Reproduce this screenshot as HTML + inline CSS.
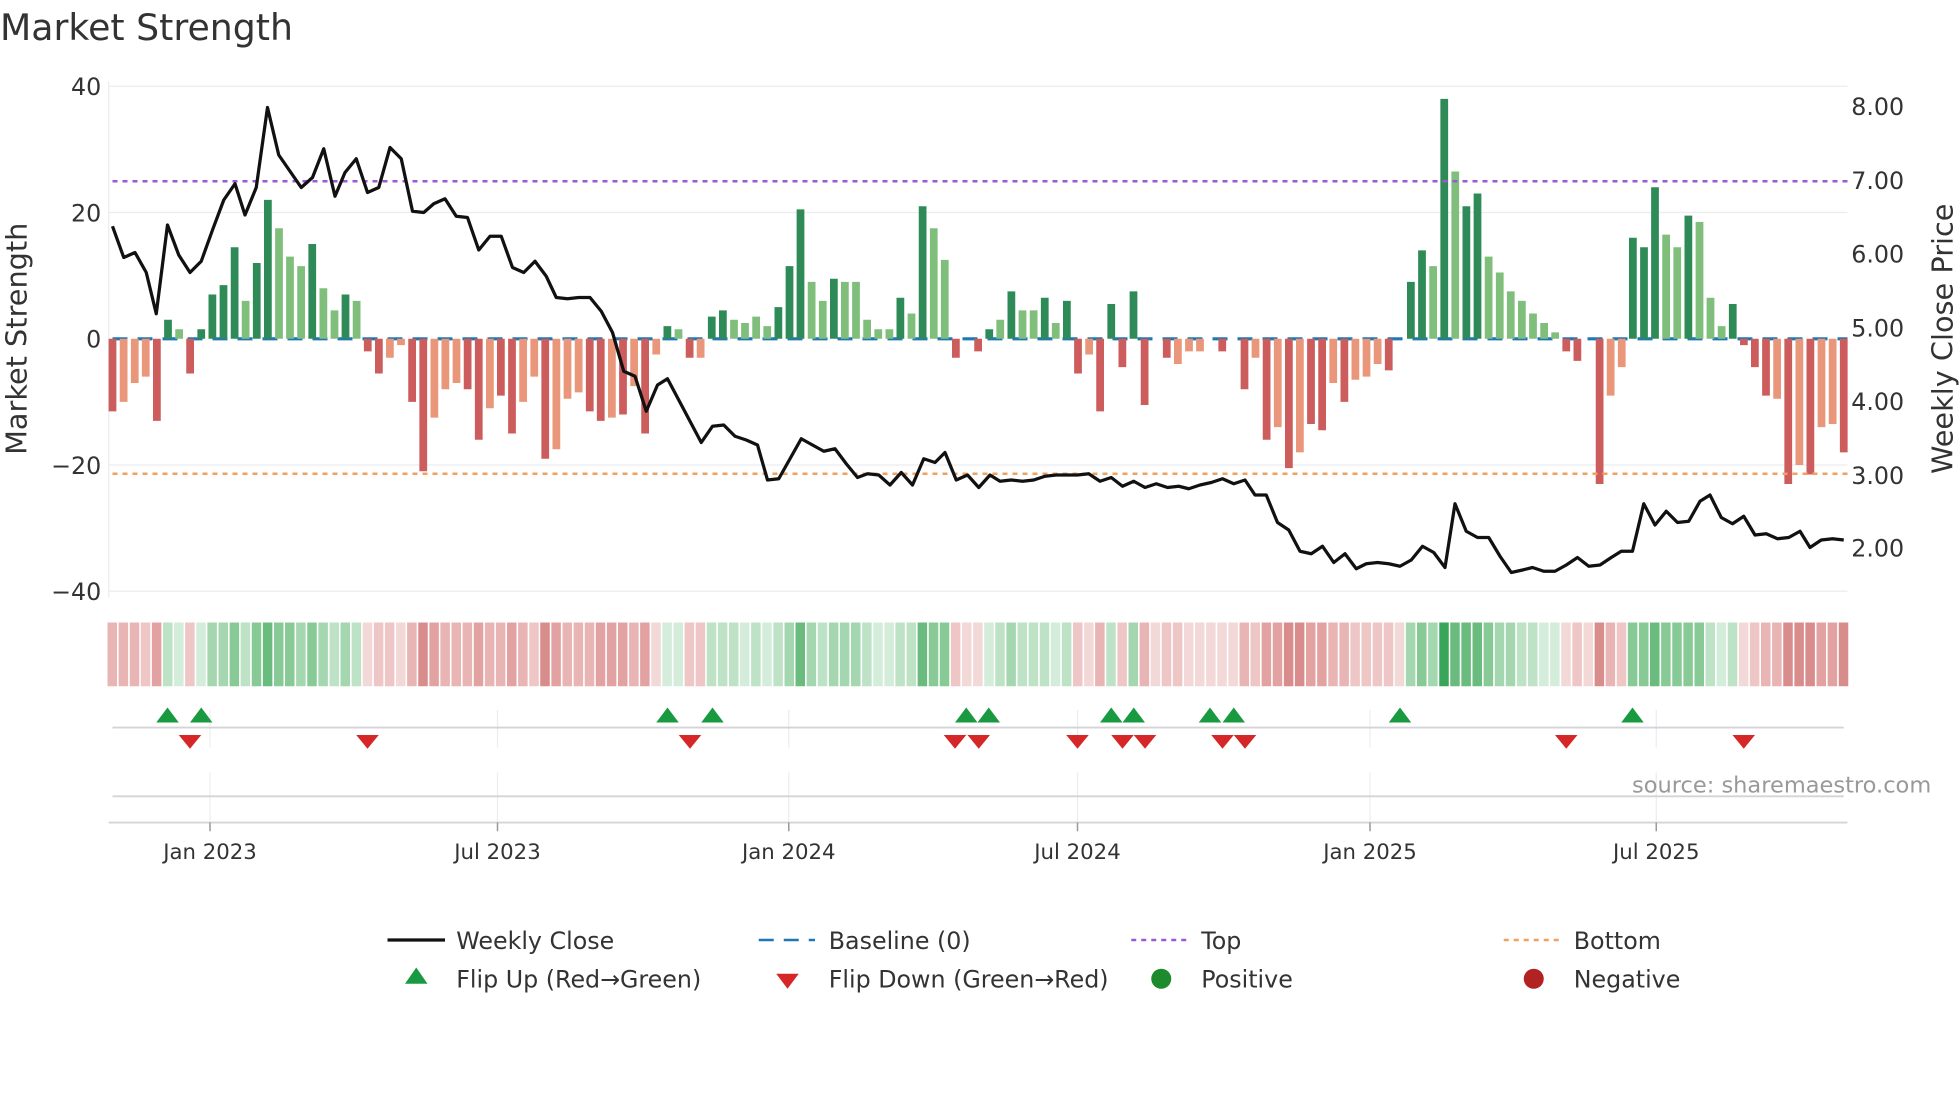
<!DOCTYPE html>
<html><head><meta charset="utf-8"><style>
html,body{margin:0;padding:0;background:#fff;}
svg{display:block;font-family:"DejaVu Sans","Liberation Sans",sans-serif;}
.G{fill:#2e8b57}.g{fill:#7fbf7b}.R{fill:#cd5c5c}.r{fill:#e9967a}
.n1{fill:#f3d8d8}.n2{fill:#eec6c6}.n3{fill:#e8b4b4}.n4{fill:#e2a2a2}.n5{fill:#d98c8c}
.p1{fill:#d4edda}.p2{fill:#bde2c5}.p3{fill:#a4d7af}.p4{fill:#88ca96}.p5{fill:#6abb7e}.p6{fill:#38a558}
</style></head><body>
<svg width="1960" height="1102" viewBox="0 0 1568 881.6" xmlns="http://www.w3.org/2000/svg">
<rect width="1568" height="882" fill="#fff"/>
<text x="0" y="32" font-size="29" fill="#333">Market Strength</text>
<g stroke="#ececf0" stroke-width="1">
<line x1="87" y1="69" x2="1478" y2="69"/><line x1="87" y1="170" x2="1478" y2="170"/>
<line x1="87" y1="372" x2="1478" y2="372"/><line x1="87" y1="473" x2="1478" y2="473"/>
<line x1="87" y1="65" x2="87" y2="478"/>
<line x1="168" y1="568" x2="168" y2="598"/><line x1="398" y1="568" x2="398" y2="598"/><line x1="631" y1="568" x2="631" y2="598"/><line x1="862" y1="568" x2="862" y2="598"/><line x1="1096" y1="568" x2="1096" y2="598"/><line x1="1325" y1="568" x2="1325" y2="598"/>
<line x1="168" y1="618" x2="168" y2="658"/><line x1="398" y1="618" x2="398" y2="658"/><line x1="631" y1="618" x2="631" y2="658"/><line x1="862" y1="618" x2="862" y2="658"/><line x1="1096" y1="618" x2="1096" y2="658"/><line x1="1325" y1="618" x2="1325" y2="658"/>
</g>
<line x1="90" y1="582" x2="1475" y2="582" stroke="#d4d4d8" stroke-width="1.5"/>
<line x1="90" y1="637" x2="1475" y2="637" stroke="#d4d4d8" stroke-width="1.5"/>
<line x1="87" y1="658" x2="1478" y2="658" stroke="#d4d4d8" stroke-width="1.5"/>
<g stroke="#999" stroke-width="1.2"><line x1="168" y1="658" x2="168" y2="665"/><line x1="398" y1="658" x2="398" y2="665"/><line x1="631" y1="658" x2="631" y2="665"/><line x1="862" y1="658" x2="862" y2="665"/><line x1="1096" y1="658" x2="1096" y2="665"/><line x1="1325" y1="658" x2="1325" y2="665"/></g>
<g font-size="17" fill="#333" text-anchor="middle">
<text x="168" y="687">Jan 2023</text><text x="398" y="687">Jul 2023</text><text x="631" y="687">Jan 2024</text><text x="862" y="687">Jul 2024</text><text x="1096" y="687">Jan 2025</text><text x="1325" y="687">Jul 2025</text>
</g>
<g font-size="19" fill="#333" text-anchor="end">
<text x="81" y="76">40</text><text x="81" y="177">20</text><text x="81" y="278">0</text><text x="81" y="379">−20</text><text x="81" y="480">−40</text>
</g>
<g font-size="19" fill="#333">
<text x="1481" y="92">8.00</text><text x="1481" y="151">7.00</text><text x="1481" y="210">6.00</text><text x="1481" y="269">5.00</text><text x="1481" y="328">4.00</text><text x="1481" y="387">3.00</text><text x="1481" y="445">2.00</text>
</g>
<text transform="translate(21,271) rotate(-90)" font-size="23" fill="#333" text-anchor="middle">Market Strength</text>
<text transform="translate(1562,271) rotate(-90)" font-size="23" fill="#333" text-anchor="middle">Weekly Close Price</text>
<line x1="90" y1="271" x2="1478" y2="271" stroke="#1f77b4" stroke-width="2.5" stroke-dasharray="12 8"/>
<g>
<rect class="R" x="86.9" y="271" width="6.2" height="58.1"/>
<rect class="r" x="95.8" y="271" width="6.2" height="50.5"/>
<rect class="r" x="104.7" y="271" width="6.2" height="35.4"/>
<rect class="r" x="113.5" y="271" width="6.2" height="30.3"/>
<rect class="R" x="122.4" y="271" width="6.2" height="65.7"/>
<rect class="G" x="131.3" y="255.8" width="6.2" height="15.2"/>
<rect class="g" x="140.2" y="263.4" width="6.2" height="7.6"/>
<rect class="R" x="149" y="271" width="6.2" height="27.8"/>
<rect class="G" x="157.9" y="263.4" width="6.2" height="7.6"/>
<rect class="G" x="166.8" y="235.6" width="6.2" height="35.4"/>
<rect class="G" x="175.7" y="228.1" width="6.2" height="42.9"/>
<rect class="G" x="184.6" y="197.8" width="6.2" height="73.2"/>
<rect class="g" x="193.4" y="240.7" width="6.2" height="30.3"/>
<rect class="G" x="202.3" y="210.4" width="6.2" height="60.6"/>
<rect class="G" x="211.2" y="159.9" width="6.2" height="111.1"/>
<rect class="g" x="220.1" y="182.6" width="6.2" height="88.4"/>
<rect class="g" x="228.9" y="205.3" width="6.2" height="65.7"/>
<rect class="g" x="237.8" y="212.9" width="6.2" height="58.1"/>
<rect class="G" x="246.7" y="195.2" width="6.2" height="75.8"/>
<rect class="g" x="255.6" y="230.6" width="6.2" height="40.4"/>
<rect class="g" x="264.5" y="248.3" width="6.2" height="22.7"/>
<rect class="G" x="273.3" y="235.6" width="6.2" height="35.4"/>
<rect class="g" x="282.2" y="240.7" width="6.2" height="30.3"/>
<rect class="R" x="291.1" y="271" width="6.2" height="10.1"/>
<rect class="R" x="300" y="271" width="6.2" height="27.8"/>
<rect class="r" x="308.8" y="271" width="6.2" height="15.2"/>
<rect class="r" x="317.7" y="271" width="6.2" height="5.1"/>
<rect class="R" x="326.6" y="271" width="6.2" height="50.5"/>
<rect class="R" x="335.5" y="271" width="6.2" height="106"/>
<rect class="r" x="344.4" y="271" width="6.2" height="63.1"/>
<rect class="r" x="353.2" y="271" width="6.2" height="40.4"/>
<rect class="r" x="362.1" y="271" width="6.2" height="35.4"/>
<rect class="R" x="371" y="271" width="6.2" height="40.4"/>
<rect class="R" x="379.9" y="271" width="6.2" height="80.8"/>
<rect class="r" x="388.8" y="271" width="6.2" height="55.6"/>
<rect class="R" x="397.6" y="271" width="6.2" height="45.5"/>
<rect class="R" x="406.5" y="271" width="6.2" height="75.8"/>
<rect class="r" x="415.4" y="271" width="6.2" height="50.5"/>
<rect class="r" x="424.3" y="271" width="6.2" height="30.3"/>
<rect class="R" x="433.1" y="271" width="6.2" height="96"/>
<rect class="r" x="442" y="271" width="6.2" height="88.4"/>
<rect class="r" x="450.9" y="271" width="6.2" height="48"/>
<rect class="r" x="459.8" y="271" width="6.2" height="42.9"/>
<rect class="R" x="468.7" y="271" width="6.2" height="58.1"/>
<rect class="R" x="477.5" y="271" width="6.2" height="65.7"/>
<rect class="r" x="486.4" y="271" width="6.2" height="63.1"/>
<rect class="R" x="495.3" y="271" width="6.2" height="60.6"/>
<rect class="r" x="504.2" y="271" width="6.2" height="37.9"/>
<rect class="R" x="513" y="271" width="6.2" height="75.8"/>
<rect class="r" x="521.9" y="271" width="6.2" height="12.6"/>
<rect class="G" x="530.8" y="260.9" width="6.2" height="10.1"/>
<rect class="g" x="539.7" y="263.4" width="6.2" height="7.6"/>
<rect class="R" x="548.6" y="271" width="6.2" height="15.2"/>
<rect class="r" x="557.4" y="271" width="6.2" height="15.2"/>
<rect class="G" x="566.3" y="253.3" width="6.2" height="17.7"/>
<rect class="G" x="575.2" y="248.3" width="6.2" height="22.7"/>
<rect class="g" x="584.1" y="255.8" width="6.2" height="15.2"/>
<rect class="g" x="592.9" y="258.4" width="6.2" height="12.6"/>
<rect class="g" x="601.8" y="253.3" width="6.2" height="17.7"/>
<rect class="g" x="610.7" y="260.9" width="6.2" height="10.1"/>
<rect class="G" x="619.6" y="245.7" width="6.2" height="25.3"/>
<rect class="G" x="628.5" y="212.9" width="6.2" height="58.1"/>
<rect class="G" x="637.3" y="167.5" width="6.2" height="103.5"/>
<rect class="g" x="646.2" y="225.5" width="6.2" height="45.5"/>
<rect class="g" x="655.1" y="240.7" width="6.2" height="30.3"/>
<rect class="G" x="664" y="223" width="6.2" height="48"/>
<rect class="g" x="672.8" y="225.5" width="6.2" height="45.5"/>
<rect class="g" x="681.7" y="225.5" width="6.2" height="45.5"/>
<rect class="g" x="690.6" y="255.8" width="6.2" height="15.2"/>
<rect class="g" x="699.5" y="263.4" width="6.2" height="7.6"/>
<rect class="g" x="708.4" y="263.4" width="6.2" height="7.6"/>
<rect class="G" x="717.2" y="238.2" width="6.2" height="32.8"/>
<rect class="g" x="726.1" y="250.8" width="6.2" height="20.2"/>
<rect class="G" x="735" y="165" width="6.2" height="106"/>
<rect class="g" x="743.9" y="182.6" width="6.2" height="88.4"/>
<rect class="g" x="752.7" y="207.9" width="6.2" height="63.1"/>
<rect class="R" x="761.6" y="271" width="6.2" height="15.2"/>
<rect class="R" x="779.4" y="271" width="6.2" height="10.1"/>
<rect class="G" x="788.3" y="263.4" width="6.2" height="7.6"/>
<rect class="g" x="797.1" y="255.8" width="6.2" height="15.2"/>
<rect class="G" x="806" y="233.1" width="6.2" height="37.9"/>
<rect class="g" x="814.9" y="248.3" width="6.2" height="22.7"/>
<rect class="g" x="823.8" y="248.3" width="6.2" height="22.7"/>
<rect class="G" x="832.7" y="238.2" width="6.2" height="32.8"/>
<rect class="g" x="841.5" y="258.4" width="6.2" height="12.6"/>
<rect class="G" x="850.4" y="240.7" width="6.2" height="30.3"/>
<rect class="R" x="859.3" y="271" width="6.2" height="27.8"/>
<rect class="r" x="868.2" y="271" width="6.2" height="12.6"/>
<rect class="R" x="877" y="271" width="6.2" height="58.1"/>
<rect class="G" x="885.9" y="243.2" width="6.2" height="27.8"/>
<rect class="R" x="894.8" y="271" width="6.2" height="22.7"/>
<rect class="G" x="903.7" y="233.1" width="6.2" height="37.9"/>
<rect class="R" x="912.6" y="271" width="6.2" height="53"/>
<rect class="R" x="930.3" y="271" width="6.2" height="15.2"/>
<rect class="r" x="939.2" y="271" width="6.2" height="20.2"/>
<rect class="r" x="948.1" y="271" width="6.2" height="10.1"/>
<rect class="r" x="956.9" y="271" width="6.2" height="10.1"/>
<rect class="R" x="974.7" y="271" width="6.2" height="10.1"/>
<rect class="R" x="992.5" y="271" width="6.2" height="40.4"/>
<rect class="r" x="1001.3" y="271" width="6.2" height="15.2"/>
<rect class="R" x="1010.2" y="271" width="6.2" height="80.8"/>
<rect class="r" x="1019.1" y="271" width="6.2" height="70.7"/>
<rect class="R" x="1028" y="271" width="6.2" height="103.5"/>
<rect class="r" x="1036.8" y="271" width="6.2" height="90.9"/>
<rect class="R" x="1045.7" y="271" width="6.2" height="68.2"/>
<rect class="R" x="1054.6" y="271" width="6.2" height="73.2"/>
<rect class="r" x="1063.5" y="271" width="6.2" height="35.4"/>
<rect class="R" x="1072.4" y="271" width="6.2" height="50.5"/>
<rect class="r" x="1081.2" y="271" width="6.2" height="32.8"/>
<rect class="r" x="1090.1" y="271" width="6.2" height="30.3"/>
<rect class="r" x="1099" y="271" width="6.2" height="20.2"/>
<rect class="R" x="1107.9" y="271" width="6.2" height="25.3"/>
<rect class="G" x="1125.6" y="225.5" width="6.2" height="45.5"/>
<rect class="G" x="1134.5" y="200.3" width="6.2" height="70.7"/>
<rect class="g" x="1143.4" y="212.9" width="6.2" height="58.1"/>
<rect class="G" x="1152.3" y="79.1" width="6.2" height="191.9"/>
<rect class="g" x="1161.1" y="137.2" width="6.2" height="133.8"/>
<rect class="G" x="1170" y="165" width="6.2" height="106"/>
<rect class="G" x="1178.9" y="154.8" width="6.2" height="116.2"/>
<rect class="g" x="1187.8" y="205.3" width="6.2" height="65.7"/>
<rect class="g" x="1196.7" y="218" width="6.2" height="53"/>
<rect class="g" x="1205.5" y="233.1" width="6.2" height="37.9"/>
<rect class="g" x="1214.4" y="240.7" width="6.2" height="30.3"/>
<rect class="g" x="1223.3" y="250.8" width="6.2" height="20.2"/>
<rect class="g" x="1232.2" y="258.4" width="6.2" height="12.6"/>
<rect class="g" x="1241" y="265.9" width="6.2" height="5.1"/>
<rect class="R" x="1249.9" y="271" width="6.2" height="10.1"/>
<rect class="R" x="1258.8" y="271" width="6.2" height="17.7"/>
<rect class="R" x="1276.6" y="271" width="6.2" height="116.2"/>
<rect class="r" x="1285.4" y="271" width="6.2" height="45.5"/>
<rect class="r" x="1294.3" y="271" width="6.2" height="22.7"/>
<rect class="G" x="1303.2" y="190.2" width="6.2" height="80.8"/>
<rect class="G" x="1312.1" y="197.8" width="6.2" height="73.2"/>
<rect class="G" x="1320.9" y="149.8" width="6.2" height="121.2"/>
<rect class="g" x="1329.8" y="187.7" width="6.2" height="83.3"/>
<rect class="g" x="1338.7" y="197.8" width="6.2" height="73.2"/>
<rect class="G" x="1347.6" y="172.5" width="6.2" height="98.5"/>
<rect class="g" x="1356.5" y="177.6" width="6.2" height="93.4"/>
<rect class="g" x="1365.3" y="238.2" width="6.2" height="32.8"/>
<rect class="g" x="1374.2" y="260.9" width="6.2" height="10.1"/>
<rect class="G" x="1383.1" y="243.2" width="6.2" height="27.8"/>
<rect class="R" x="1392" y="271" width="6.2" height="5.1"/>
<rect class="R" x="1400.8" y="271" width="6.2" height="22.7"/>
<rect class="R" x="1409.7" y="271" width="6.2" height="45.5"/>
<rect class="r" x="1418.6" y="271" width="6.2" height="48"/>
<rect class="R" x="1427.5" y="271" width="6.2" height="116.2"/>
<rect class="r" x="1436.4" y="271" width="6.2" height="101"/>
<rect class="R" x="1445.2" y="271" width="6.2" height="108.6"/>
<rect class="r" x="1454.1" y="271" width="6.2" height="70.7"/>
<rect class="r" x="1463" y="271" width="6.2" height="68.2"/>
<rect class="R" x="1471.9" y="271" width="6.2" height="90.9"/>
</g>
<line x1="90" y1="145" x2="1478" y2="145" stroke="#9b59d9" stroke-width="2" stroke-dasharray="4 4"/>
<line x1="90" y1="379" x2="1478" y2="379" stroke="#f0a060" stroke-width="2" stroke-dasharray="4 4"/>
<polyline fill="none" stroke="#111" stroke-width="2.6" stroke-linejoin="round" points="90,181 99,206 108,202 117,218 125,251 134,180 143,204 152,218 161,209 170,184 179,160 188,147 196,172 205,150 214,86 223,124 232,137 241,150 250,142 259,119 268,157 276,138 285,127 294,154 303,150 312,118 321,127 330,169 339,170 347,163 356,159 365,173 374,174 383,200 392,189 401,189 410,214 419,218 428,209 437,221 445,238 454,239 463,238 472,238 481,249 490,266 499,297 508,301 517,329 526,308 534,303 543,320 552,337 561,354 570,341 579,340 588,349 597,352 606,356 614,384 623,383 632,367 641,351 650,356 659,361 668,359 677,371 686,382 694,379 703,380 712,388 721,378 730,388 739,367 748,370 756,362 765,384 774,380 783,390 792,380 800,385 809,384 818,385 827,384 836,381 845,380 853,380 862,380 871,379 880,385 889,382 898,389 907,385 916,390 925,387 934,390 943,389 951,391 960,388 969,386 978,383 987,387 996,384 1004,396 1013,396 1022,418 1031,424 1040,441 1049,443 1058,437 1067,450 1076,443 1085,455 1093,451 1102,450 1111,451 1120,453 1129,448 1138,437 1147,442 1156,454 1164,403 1173,425 1182,430 1191,430 1200,445 1209,458 1218,456 1226,454 1235,457 1244,457 1253,452 1262,446 1271,453 1280,452 1289,446 1297,441 1306,441 1315,403 1324,420 1333,409 1342,418 1351,417 1360,401 1368,396 1377,414 1386,419 1395,413 1404,428 1413,427 1422,431 1431,430 1440,425 1448,438 1457,432 1466,431 1475,432"/>
<g transform="translate(0,498)">
<rect class="n3" x="86" width="7.6" height="51"/><rect class="n3" x="94.9" width="7.6" height="51"/><rect class="n3" x="103.8" width="7.6" height="51"/><rect class="n2" x="112.6" width="7.6" height="51"/><rect class="n4" x="121.5" width="7.6" height="51"/>
<rect class="p2" x="130.4" width="7.6" height="51"/><rect class="p1" x="139.3" width="7.6" height="51"/><rect class="n2" x="148.1" width="7.6" height="51"/><rect class="p1" x="157" width="7.6" height="51"/><rect class="p3" x="165.9" width="7.6" height="51"/>
<rect class="p3" x="174.8" width="7.6" height="51"/><rect class="p4" x="183.7" width="7.6" height="51"/><rect class="p2" x="192.5" width="7.6" height="51"/><rect class="p4" x="201.4" width="7.6" height="51"/><rect class="p5" x="210.3" width="7.6" height="51"/>
<rect class="p4" x="219.2" width="7.6" height="51"/><rect class="p4" x="228" width="7.6" height="51"/><rect class="p3" x="236.9" width="7.6" height="51"/><rect class="p4" x="245.8" width="7.6" height="51"/><rect class="p3" x="254.7" width="7.6" height="51"/>
<rect class="p2" x="263.6" width="7.6" height="51"/><rect class="p3" x="272.4" width="7.6" height="51"/><rect class="p2" x="281.3" width="7.6" height="51"/><rect class="n1" x="290.2" width="7.6" height="51"/><rect class="n2" x="299.1" width="7.6" height="51"/>
<rect class="n2" x="307.9" width="7.6" height="51"/><rect class="n1" x="316.8" width="7.6" height="51"/><rect class="n3" x="325.7" width="7.6" height="51"/><rect class="n5" x="334.6" width="7.6" height="51"/><rect class="n4" x="343.5" width="7.6" height="51"/>
<rect class="n3" x="352.3" width="7.6" height="51"/><rect class="n3" x="361.2" width="7.6" height="51"/><rect class="n3" x="370.1" width="7.6" height="51"/><rect class="n4" x="379" width="7.6" height="51"/><rect class="n3" x="387.9" width="7.6" height="51"/>
<rect class="n3" x="396.7" width="7.6" height="51"/><rect class="n4" x="405.6" width="7.6" height="51"/><rect class="n3" x="414.5" width="7.6" height="51"/><rect class="n2" x="423.4" width="7.6" height="51"/><rect class="n5" x="432.2" width="7.6" height="51"/>
<rect class="n4" x="441.1" width="7.6" height="51"/><rect class="n3" x="450" width="7.6" height="51"/><rect class="n3" x="458.9" width="7.6" height="51"/><rect class="n3" x="467.8" width="7.6" height="51"/><rect class="n4" x="476.6" width="7.6" height="51"/>
<rect class="n4" x="485.5" width="7.6" height="51"/><rect class="n4" x="494.4" width="7.6" height="51"/><rect class="n3" x="503.3" width="7.6" height="51"/><rect class="n4" x="512.1" width="7.6" height="51"/><rect class="n1" x="521" width="7.6" height="51"/>
<rect class="p1" x="529.9" width="7.6" height="51"/><rect class="p1" x="538.8" width="7.6" height="51"/><rect class="n2" x="547.7" width="7.6" height="51"/><rect class="n2" x="556.5" width="7.6" height="51"/><rect class="p2" x="565.4" width="7.6" height="51"/>
<rect class="p2" x="574.3" width="7.6" height="51"/><rect class="p2" x="583.2" width="7.6" height="51"/><rect class="p1" x="592" width="7.6" height="51"/><rect class="p2" x="600.9" width="7.6" height="51"/><rect class="p1" x="609.8" width="7.6" height="51"/>
<rect class="p2" x="618.7" width="7.6" height="51"/><rect class="p3" x="627.6" width="7.6" height="51"/><rect class="p5" x="636.4" width="7.6" height="51"/><rect class="p3" x="645.3" width="7.6" height="51"/><rect class="p2" x="654.2" width="7.6" height="51"/>
<rect class="p3" x="663.1" width="7.6" height="51"/><rect class="p3" x="671.9" width="7.6" height="51"/><rect class="p3" x="680.8" width="7.6" height="51"/><rect class="p2" x="689.7" width="7.6" height="51"/><rect class="p1" x="698.6" width="7.6" height="51"/>
<rect class="p1" x="707.5" width="7.6" height="51"/><rect class="p2" x="716.3" width="7.6" height="51"/><rect class="p2" x="725.2" width="7.6" height="51"/><rect class="p5" x="734.1" width="7.6" height="51"/><rect class="p4" x="743" width="7.6" height="51"/>
<rect class="p4" x="751.8" width="7.6" height="51"/><rect class="n2" x="760.7" width="7.6" height="51"/><rect class="n1" x="769.6" width="7.6" height="51"/><rect class="n1" x="778.5" width="7.6" height="51"/><rect class="p1" x="787.4" width="7.6" height="51"/>
<rect class="p2" x="796.2" width="7.6" height="51"/><rect class="p3" x="805.1" width="7.6" height="51"/><rect class="p2" x="814" width="7.6" height="51"/><rect class="p2" x="822.9" width="7.6" height="51"/><rect class="p2" x="831.8" width="7.6" height="51"/>
<rect class="p1" x="840.6" width="7.6" height="51"/><rect class="p2" x="849.5" width="7.6" height="51"/><rect class="n2" x="858.4" width="7.6" height="51"/><rect class="n1" x="867.3" width="7.6" height="51"/><rect class="n3" x="876.1" width="7.6" height="51"/>
<rect class="p2" x="885" width="7.6" height="51"/><rect class="n2" x="893.9" width="7.6" height="51"/><rect class="p3" x="902.8" width="7.6" height="51"/><rect class="n3" x="911.7" width="7.6" height="51"/><rect class="n1" x="920.5" width="7.6" height="51"/>
<rect class="n2" x="929.4" width="7.6" height="51"/><rect class="n2" x="938.3" width="7.6" height="51"/><rect class="n1" x="947.2" width="7.6" height="51"/><rect class="n1" x="956" width="7.6" height="51"/><rect class="n1" x="964.9" width="7.6" height="51"/>
<rect class="n1" x="973.8" width="7.6" height="51"/><rect class="n1" x="982.7" width="7.6" height="51"/><rect class="n3" x="991.6" width="7.6" height="51"/><rect class="n2" x="1000.4" width="7.6" height="51"/><rect class="n4" x="1009.3" width="7.6" height="51"/>
<rect class="n4" x="1018.2" width="7.6" height="51"/><rect class="n5" x="1027.1" width="7.6" height="51"/><rect class="n5" x="1035.9" width="7.6" height="51"/><rect class="n4" x="1044.8" width="7.6" height="51"/><rect class="n4" x="1053.7" width="7.6" height="51"/>
<rect class="n3" x="1062.6" width="7.6" height="51"/><rect class="n3" x="1071.5" width="7.6" height="51"/><rect class="n2" x="1080.3" width="7.6" height="51"/><rect class="n2" x="1089.2" width="7.6" height="51"/><rect class="n2" x="1098.1" width="7.6" height="51"/>
<rect class="n2" x="1107" width="7.6" height="51"/><rect class="n1" x="1115.8" width="7.6" height="51"/><rect class="p3" x="1124.7" width="7.6" height="51"/><rect class="p4" x="1133.6" width="7.6" height="51"/><rect class="p3" x="1142.5" width="7.6" height="51"/>
<rect class="p6" x="1151.4" width="7.6" height="51"/><rect class="p5" x="1160.2" width="7.6" height="51"/><rect class="p5" x="1169.1" width="7.6" height="51"/><rect class="p5" x="1178" width="7.6" height="51"/><rect class="p4" x="1186.9" width="7.6" height="51"/>
<rect class="p3" x="1195.8" width="7.6" height="51"/><rect class="p3" x="1204.6" width="7.6" height="51"/><rect class="p2" x="1213.5" width="7.6" height="51"/><rect class="p2" x="1222.4" width="7.6" height="51"/><rect class="p1" x="1231.3" width="7.6" height="51"/>
<rect class="p1" x="1240.1" width="7.6" height="51"/><rect class="n1" x="1249" width="7.6" height="51"/><rect class="n2" x="1257.9" width="7.6" height="51"/><rect class="n1" x="1266.8" width="7.6" height="51"/><rect class="n5" x="1275.7" width="7.6" height="51"/>
<rect class="n3" x="1284.5" width="7.6" height="51"/><rect class="n2" x="1293.4" width="7.6" height="51"/><rect class="p4" x="1302.3" width="7.6" height="51"/><rect class="p4" x="1311.2" width="7.6" height="51"/><rect class="p5" x="1320" width="7.6" height="51"/>
<rect class="p4" x="1328.9" width="7.6" height="51"/><rect class="p4" x="1337.8" width="7.6" height="51"/><rect class="p4" x="1346.7" width="7.6" height="51"/><rect class="p4" x="1355.6" width="7.6" height="51"/><rect class="p2" x="1364.4" width="7.6" height="51"/>
<rect class="p1" x="1373.3" width="7.6" height="51"/><rect class="p2" x="1382.2" width="7.6" height="51"/><rect class="n1" x="1391.1" width="7.6" height="51"/><rect class="n2" x="1399.9" width="7.6" height="51"/><rect class="n3" x="1408.8" width="7.6" height="51"/>
<rect class="n3" x="1417.7" width="7.6" height="51"/><rect class="n5" x="1426.6" width="7.6" height="51"/><rect class="n5" x="1435.5" width="7.6" height="51"/><rect class="n5" x="1444.3" width="7.6" height="51"/><rect class="n4" x="1453.2" width="7.6" height="51"/>
<rect class="n4" x="1462.1" width="7.6" height="51"/><rect class="n5" x="1471" width="7.6" height="51"/>
</g>
<g fill="#1a9a40">
<polygon points="134,566 125,578 143,578"/><polygon points="161,566 152,578 170,578"/><polygon points="534,566 525,578 543,578"/><polygon points="570,566 561,578 579,578"/><polygon points="773,566 764,578 782,578"/><polygon points="791,566 782,578 800,578"/><polygon points="889,566 880,578 898,578"/><polygon points="907,566 898,578 916,578"/><polygon points="968,566 959,578 977,578"/><polygon points="987,566 978,578 996,578"/><polygon points="1120,566 1111,578 1129,578"/><polygon points="1306,566 1297,578 1315,578"/>
</g>
<g fill="#d62728">
<polygon points="143,588 161,588 152,599"/><polygon points="285,588 303,588 294,599"/><polygon points="543,588 561,588 552,599"/><polygon points="755,588 773,588 764,599"/><polygon points="774,588 792,588 783,599"/><polygon points="853,588 871,588 862,599"/><polygon points="889,588 907,588 898,599"/><polygon points="907,588 925,588 916,599"/><polygon points="969,588 987,588 978,599"/><polygon points="987,588 1005,588 996,599"/><polygon points="1244,588 1262,588 1253,599"/><polygon points="1386,588 1404,588 1395,599"/>
</g>
<text x="1545" y="634" font-size="18" fill="#999" text-anchor="end">source: sharemaestro.com</text>
<g font-size="19" fill="#333">
<line x1="310" y1="752" x2="356" y2="752" stroke="#111" stroke-width="2.6"/><text x="365" y="759">Weekly Close</text>
<line x1="607" y1="752" x2="652" y2="752" stroke="#1f77b4" stroke-width="2" stroke-dasharray="12 8"/><text x="663" y="759">Baseline (0)</text>
<line x1="905" y1="752" x2="950" y2="752" stroke="#9b59d9" stroke-width="2" stroke-dasharray="4 4"/><text x="961" y="759">Top</text>
<line x1="1203" y1="752" x2="1248" y2="752" stroke="#f0a060" stroke-width="2" stroke-dasharray="4 4"/><text x="1259" y="759">Bottom</text>
<polygon points="333,774 324,787 342,787" fill="#1a9a40"/><text x="365" y="790">Flip Up (Red→Green)</text>
<polygon points="621,779 639,779 630,791" fill="#d62728"/><text x="663" y="790">Flip Down (Green→Red)</text>
<circle cx="929" cy="783" r="8" fill="#1e8a2e"/><text x="961" y="790">Positive</text>
<circle cx="1227" cy="783" r="8" fill="#b22222"/><text x="1259" y="790">Negative</text>
</g>
</svg>
</body></html>
